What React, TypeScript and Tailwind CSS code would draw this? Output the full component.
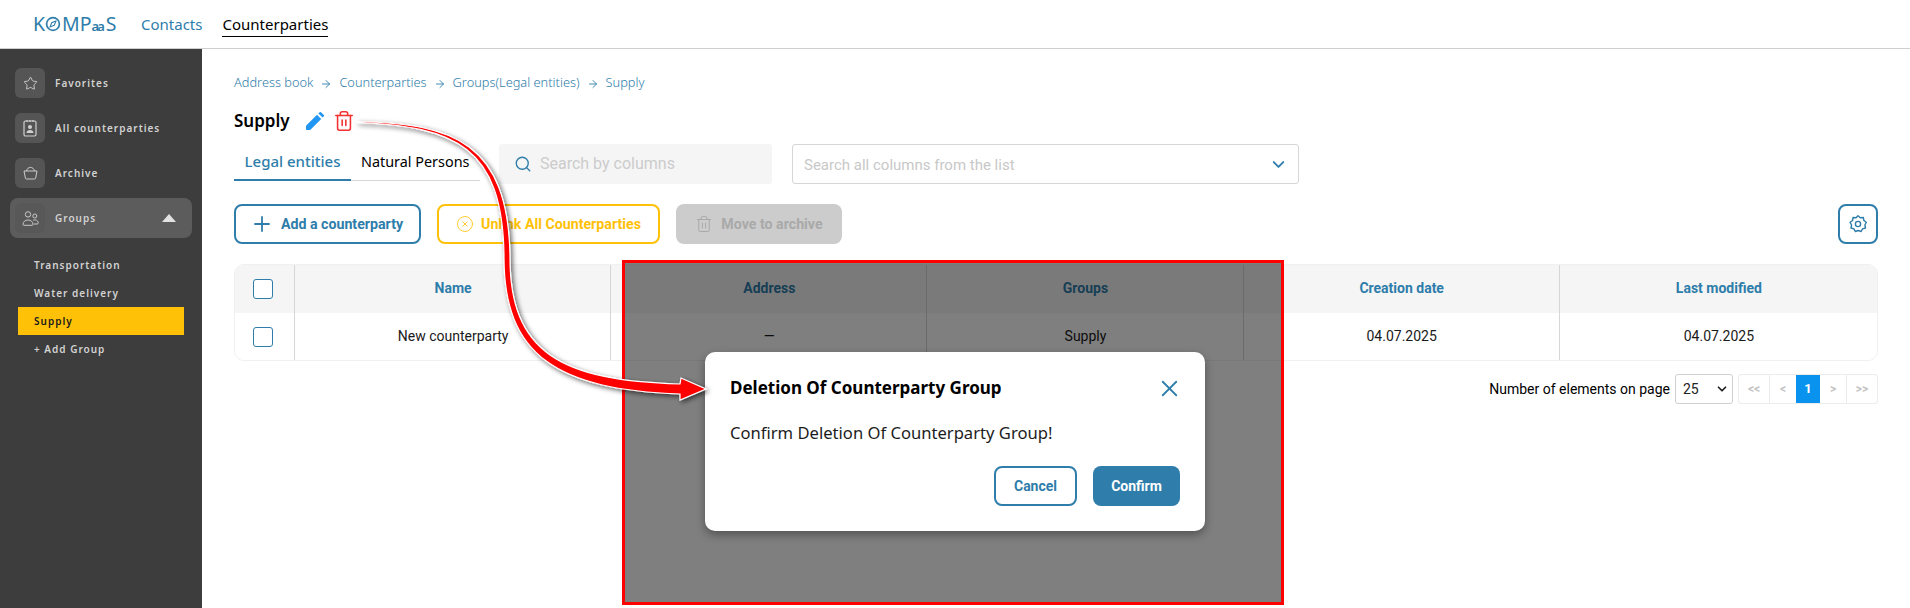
import React from "react";
import { Star, Plus, CircleX, Trash2, Search, ChevronDown, X, ArrowRight } from "lucide-react";

const noto = "font-['Noto_Sans',sans-serif]";
const rob = "font-['Roboto',sans-serif]";

function Logo() {
  return (
    <div className={`flex items-center text-[#2e7daa] text-[19.5px] leading-none font-['Noto_Sans',sans-serif] w-[86px] ml-[33px]`}>
      <span>K</span>
      <svg width="16" height="16" viewBox="0 0 19 19" fill="none" stroke="#2e7daa">
        <circle cx="9.5" cy="9.5" r="7.6" strokeWidth="2" />
        <path d="M13 6 L8 8 L6 13 L11 11 Z" strokeWidth="1.2" />
      </svg>
      <span className="ml-[1px]">MP</span>
      <span className="text-[13px] tracking-[-2px] mt-[4px] font-semibold">aa</span>
      <span className="ml-[3px]">S</span>
    </div>
  );
}

function SideBox({ children, cls = "" }: { children: React.ReactNode; cls?: string }) {
  return <div className={`w-[30px] h-[30px] rounded-md bg-[#555555] flex items-center justify-center shrink-0 ${cls}`}>{children}</div>;
}

function SideItem({ icon, label }: { icon: React.ReactNode; label: string }) {
  return (
    <div className="flex items-center gap-[10px] ml-[15px] h-[30px]">
      <SideBox>{icon}</SideBox>
      <span className="text-[10px] font-semibold tracking-[1px] text-[#d2d2d2]">{label}</span>
    </div>
  );
}

function ContactBook() {
  return (
    <svg width="16" height="18" viewBox="0 0 16 18" fill="none" stroke="#d0d0d0" strokeWidth="1.2">
      <rect x="2" y="2" width="12" height="15" rx="1.5" />
      <path d="M5 1v2M8 1v2M11 1v2" />
      <circle cx="8" cy="8" r="2" fill="#d0d0d0" stroke="none" />
      <path d="M4.5 14c0-4 7-4 7 0z" fill="#d0d0d0" stroke="none" />
    </svg>
  );
}

function Basket() {
  return (
    <svg width="15" height="14" viewBox="0 0 15 14" fill="none" stroke="#d8d8d8" strokeWidth="0.9" strokeLinejoin="round">
      <path d="M3.6 5C4.2 .2 10.8 .2 11.4 5" />
      <path d="M1 5h13l-1.4 7.2a1 1 0 0 1-1 .8H3.4a1 1 0 0 1-1-.8z" />
    </svg>
  );
}

function People() {
  return (
    <svg width="17" height="15" viewBox="0 0 17 15" fill="none" stroke="#c8c8c8" strokeWidth="1">
      <circle cx="6" cy="3.4" r="2.7" />
      <circle cx="12.8" cy="5" r="2" />
      <path d="M1 13.5c0-6 10-6 10 0 0 .5-.4 .8-.8 .8H1.8c-.4 0-.8-.3-.8-.8z" />
      <path d="M11.2 9.2c2.5-1 5 .4 5 3 0 .5-.3 .8-.8 .8h-3.6" />
    </svg>
  );
}

function Sidebar() {
  return (
    <aside className={`w-[202px] shrink-0 bg-[#3d3d3d] pt-[19px] ${noto}`}>
      <div className="flex flex-col gap-[15px]">
        <SideItem label="Favorites" icon={<Star size={15} strokeWidth={1.3} className="text-[#e0e0e0]" />} />
        <SideItem label="All counterparties" icon={<ContactBook />} />
        <SideItem label="Archive" icon={<Basket />} />
      </div>
      <div className="mt-[10px] mx-[10px] h-[40px] rounded-lg bg-[#5c5c5c] flex items-center pl-[5px] pr-[16px]">
        <SideBox cls="bg-[#585858]"><People /></SideBox>
        <span className="ml-[10px] text-[10px] font-semibold tracking-[1px] text-[#d2d2d2]">Groups</span>
        <span className="ml-auto w-0 h-0 border-l-[7px] border-r-[7px] border-b-[8px] border-l-transparent border-r-transparent border-b-[#e2e2e2]" />
      </div>
      <div className="mt-[13px] mx-[18px] text-[10px] font-semibold tracking-[1px] text-[#d2d2d2]">
        <div className="h-[28px] flex items-center pl-[16px]">Transportation</div>
        <div className="h-[28px] flex items-center pl-[16px]">Water delivery</div>
        <div className="h-[28px] flex items-center pl-[16px] bg-[#ffc107] text-[#1a1a1a]">Supply</div>
        <div className="h-[28px] flex items-center pl-[16px]">+ Add Group</div>
      </div>
    </aside>
  );
}

function Crumb() {
  return <ArrowRight size={12} strokeWidth={1.8} className="text-[#2e7daa] mx-[7px] mt-[1px]" />;
}

function Pencil() {
  return (
    <svg width="18" height="18" viewBox="0 0 18 18" fill="#2196f3">
      <path d="M0 18v-4.2L11 2.8l4.2 4.2L4.2 18z" />
      <path d="M12.4 1.4 13.4.4a1.3 1.3 0 0 1 1.8 0l2.4 2.4a1.3 1.3 0 0 1 0 1.8l-1 1z" />
    </svg>
  );
}

function Gear() {
  return (
    <svg width="20" height="20" viewBox="0 0 20 20" fill="none" stroke="#2e7daa" strokeWidth="1.4" strokeLinejoin="round">
      <path d="M10 1.8l2.3 2 3-.3.6 3 2.4 1.8L16.9 11l.6 3-2.9.9-1.5 2.6-2.9-1-2.9 1-1.4-2.6-2.9-.9.6-3-1.5-2.7 2.4-1.8.6-3 3 .3z" />
      <circle cx="10" cy="10" r="2.6" />
    </svg>
  );
}

function Check() {
  return <span className="block w-[20px] h-[20px] rounded-[3px] border border-[#2e7daa] bg-white" />;
}

const headCell = "flex items-center justify-center border-l border-[#d6d6d6] text-[14px] font-bold text-[#2e7daa] pl-[1px] pb-[1px]";
const bodyCell = "flex items-center justify-center border-l border-[#d6d6d6] text-[14px] text-[#1a1a1a] pl-[1px] pb-[1px]";
const cols = ["Name", "Address", "Groups", "Creation date", "Last modified"];
const vals = ["New counterparty", "—", "Supply", "04.07.2025", "04.07.2025"];
const gridCols = "grid grid-cols-[59px_repeat(4,316.2px)_1fr]";

function Table() {
  return (
    <div className={`mt-[20px] rounded-[10px] border border-[#f0f0f0] overflow-hidden ${rob}`}>
      <div className={`${gridCols} h-[48px] bg-[#f5f5f5]`}>
        <div className="flex items-center justify-center pr-[4px] pb-[1px]"><Check /></div>
        {cols.map((c) => <div key={c} className={headCell}>{c}</div>)}
      </div>
      <div className={`${gridCols} h-[47px] bg-white`}>
        <div className="flex items-center justify-center pr-[4px]"><Check /></div>
        {vals.map((c, i) => <div key={i} className={bodyCell}>{c}</div>)}
      </div>
    </div>
  );
}

function Pager() {
  return (
    <div className={`mt-[13px] flex items-center justify-end ${rob}`}>
      <span className="text-[14px] text-black">Number of elements on page</span>
      <div className="ml-[5px] w-[58px] h-[30px] rounded-[3px] border border-[#cfcfcf] flex items-center justify-between pl-[7px] pr-[3px] text-[14px] text-[#222]">
        25
        <ChevronDown size={14} strokeWidth={3} className="text-[#222]" />
      </div>
      <div className="ml-[5px] h-[30px] w-[140px] rounded-[3px] border border-[#ececec] flex text-[12px] font-bold text-[#c4c4c4]">
        <span className="w-[31px] flex items-center justify-center border-r border-[#ececec]">&lt;&lt;</span>
        <span className="w-[26px] flex items-center justify-center">&lt;</span>
        <span className="w-[24px] flex items-center justify-center bg-[#0a93ee] text-white text-[13px]">1</span>
        <span className="w-[27px] flex items-center justify-center border-r border-[#ececec]">&gt;</span>
        <span className="flex-1 flex items-center justify-center">&gt;&gt;</span>
      </div>
    </div>
  );
}

function Main() {
  return (
    <main className={`flex-1 px-[32px] pt-[25px] bg-white ${noto}`}>
      <div className="flex items-center text-[12.8px] h-[18px] font-light text-[#2e7daa]">
        <span>Address book</span><Crumb />
        <span>Counterparties</span><Crumb />
        <span>Groups(Legal entities)</span><Crumb />
        <span>Supply</span>
      </div>
      <div className="mt-[17px] flex items-center h-[24px]">
        <h1 className="text-[17px] font-semibold text-black">Supply</h1>
        <span className="ml-[16px]"><Pencil /></span>
        <Trash2 size={22} strokeWidth={1.7} className="ml-[9px] text-[#f62f2f]" />
      </div>
      <div className="mt-[11px] flex h-[40px]">
        <div className="flex w-[246px] h-[37px] border-b border-[#d8d8d8] whitespace-nowrap">
          <span className="w-[117px] h-[37px] border-b-2 border-[#2e7daa] text-[#2e7daa] text-[15px] font-medium flex items-center justify-center">Legal entities</span>
          <span className="flex-1 flex items-center pl-[10px] text-[14.4px] text-black">Natural Persons</span>
        </div>
        <div className={`ml-[19px] w-[273px] h-[40px] rounded-[3px] bg-[#f5f5f5] flex items-center pl-[15px] gap-[8px] ${rob} text-[16px] text-[#cccccc]`}>
          <Search size={18} strokeWidth={1.8} className="text-[#2e7daa]" />
          Search by columns
        </div>
        <div className={`ml-[20px] w-[507px] h-[40px] rounded-[3px] border border-[#d6d6d6] flex items-center pl-[11px] pr-[10px] justify-between text-[15px] text-[#c8c8c8] ${rob}`}>
          <span className="mt-[2px]">Search all columns from the list</span>
          <ChevronDown size={19} strokeWidth={2.4} className="text-[#2e7daa]" />
        </div>
      </div>
      <div className={`mt-[20px] flex items-center h-[40px] text-[14.2px] font-bold ${rob}`}>
        <button className="w-[187px] h-[40px] rounded-[8px] border-2 border-[#2e7daa] text-[#2e7daa] flex items-center justify-center gap-[7px] pr-[2px]">
          <Plus size={24} strokeWidth={1.8} /><span className="mt-[1px]">Add a counterparty</span>
        </button>
        <button className="ml-[16px] w-[223px] h-[40px] rounded-[8px] border-2 border-[#ffc107] text-[#ffc107] flex items-center justify-center gap-[7px]">
          <CircleX size={18} strokeWidth={1.1} /><span className="mt-[1px]">Unlink All Counterparties</span>
        </button>
        <button className="ml-[16px] w-[166px] h-[40px] rounded-[8px] bg-[#cccccc] text-[#a9a9a9] flex items-center justify-center gap-[8px]">
          <Trash2 size={18} strokeWidth={1.3} /><span className="mt-[1px]">Move to archive</span>
        </button>
        <button className="ml-auto w-[40px] h-[40px] rounded-[8px] border-2 border-[#2e7daa] flex items-center justify-center">
          <Gear />
        </button>
      </div>
      <Table />
      <Pager />
    </main>
  );
}

function Overlay() {
  return (
    <div className="absolute left-[622px] top-[260px] w-[662px] h-[345px] border-[3px] border-[#ff0000] bg-[rgba(0,0,0,0.5)]" />
  );
}

function Modal() {
  return (
    <div className={`absolute left-[705px] top-[352px] w-[500px] h-[179px] rounded-[10px] bg-white shadow-[0_4px_10px_rgba(0,0,0,0.35)] pl-[25px] pr-[25px] pt-[22px] ${noto}`}>
      <div className="flex items-center justify-between h-[28px]">
        <span className="text-[17px] font-bold text-black">Deletion Of Counterparty Group</span>
        <X size={27} strokeWidth={1.6} className="text-[#2e7daa] -mr-[3px]" />
      </div>
      <p className="mt-[21px] text-[16.6px] text-[#1c1c1c] leading-[20px] whitespace-nowrap">Confirm Deletion Of Counterparty Group!</p>
      <div className={`mt-[23px] flex justify-end gap-[16px] text-[14px] font-bold ${rob}`}>
        <button className="w-[83px] h-[40px] rounded-[8px] border-2 border-[#2e7daa] text-[#2e7daa]">Cancel</button>
        <button className="w-[87px] h-[40px] rounded-[8px] bg-[#2e7daa] text-white">Confirm</button>
      </div>
    </div>
  );
}

function Arrow() {
  return (
    <svg className="absolute left-0 top-0 pointer-events-none" width="1910" height="608" viewBox="0 0 1910 608" fill="none">
      <defs>
        <filter id="sh" x="-20%" y="-20%" width="140%" height="140%">
          <feDropShadow dx="2" dy="2" stdDeviation="2.5" floodColor="#000" floodOpacity="0.6" />
        </filter>
      </defs>
      <path
        d="M357 121.5C455 123.5 507.5 143.5 510 255C509 353 561 380.5 680 384L681 378L706 389L680 400L680 394C559 389.5 503 357 504 255C502.5 146.5 455 126.5 357 122.5Z"
        fill="#ff0000"
        stroke="#ffffff"
        strokeWidth="1.2"
        filter="url(#sh)"
      />
    </svg>
  );
}

export default function App() {
  return (
    <div className={`relative w-[1910px] h-[608px] overflow-hidden bg-white ${noto}`}>
      <header className="h-[49px] border-b border-[#cfcfcf] flex items-center">
        <Logo />
        <nav className="ml-[22px] flex items-center gap-[20px] text-[15px]">
          <span className="text-[#2e7daa]">Contacts</span>
          <span className="text-black border-b border-black leading-[24px] h-[25px] mt-[1px]">Counterparties</span>
        </nav>
      </header>
      <div className="flex h-[559px]">
        <Sidebar />
        <Main />
      </div>
      <Overlay />
      <Modal />
      <Arrow />
    </div>
  );
}
